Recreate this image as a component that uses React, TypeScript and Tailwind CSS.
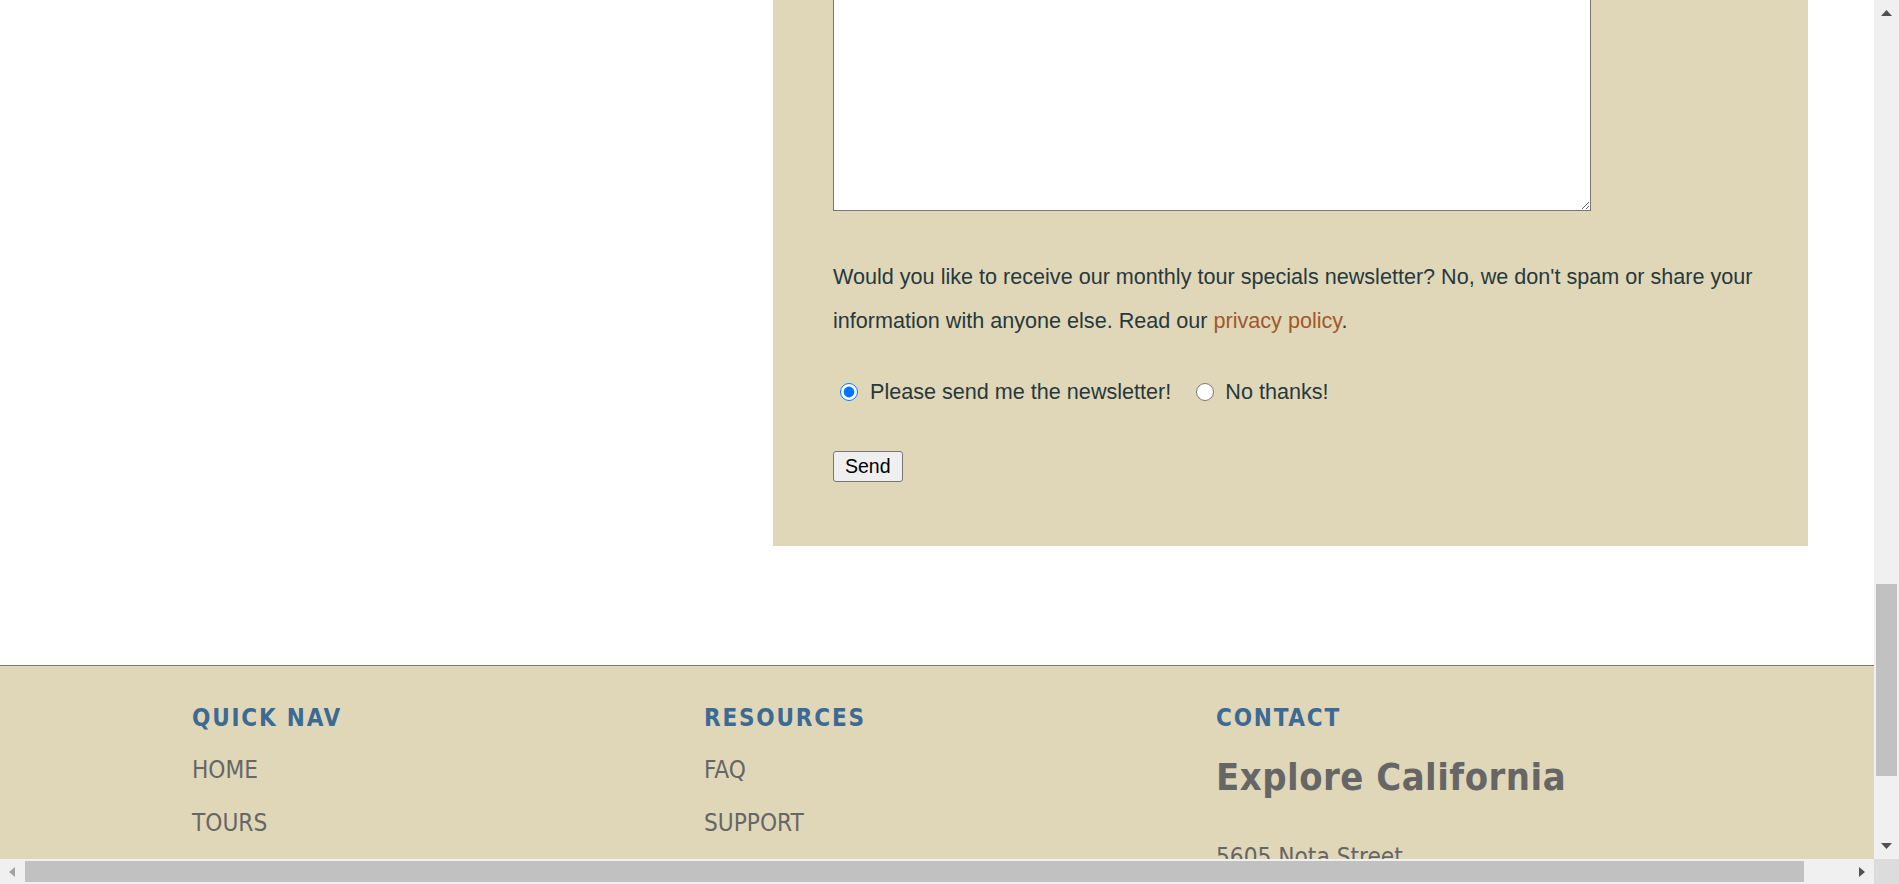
import React from "react"

const navCols = [
  { title: "QUICK NAV", links: ["HOME", "TOURS"] },
  { title: "RESOURCES", links: ["FAQ", "SUPPORT"] },
]

function Arrow({ dir, className }: { dir: "up" | "down" | "left" | "right"; className: string }) {
  const pts = {
    up: "0,6 5.5,0 11,6",
    down: "0,0 11,0 5.5,6",
    left: "6,0 6,10 0,5",
    right: "0,0 0,10 6,5",
  }[dir]
  const vb = dir === "up" || dir === "down" ? "0 0 11 6" : "0 0 6 10"
  const size = dir === "up" || dir === "down" ? "w-[11px] h-[6px]" : "w-[6px] h-[10px]"
  return (
    <svg viewBox={vb} className={`${size} ${className}`}>
      <polygon points={pts} fill="currentColor" />
    </svg>
  )
}

export default function App() {
  return (
    <div className="w-[1899px] h-[884px] overflow-hidden flex flex-col bg-white">
      <div className="flex h-[859px]">
        <main className="w-[1874px] flex flex-col overflow-hidden">
          {/* contact form panel, page scrolled past its top */}
          <div className="h-[665px] shrink-0">
            <section className="ml-[773px] w-[1035px] h-[546px] bg-[#e0d7b8] pl-[60px] pr-[40px] flex flex-col items-start font-['Liberation_Sans',Arial,sans-serif] text-[#27393d]">
              <textarea className="-mt-[10px] h-[221px] w-[758px] bg-white border border-[#767676] resize" />
              <p className="mt-[44px] text-[21.6px] leading-[44px]">
                Would you like to receive our monthly tour specials newsletter? No, we don't spam or share your
                information with anyone else. Read our <a className="text-[#a0582c]">privacy policy</a>.
              </p>
              <div className="mt-[27px] flex items-center text-[21.6px] leading-[44px]">
                <input type="radio" name="news" defaultChecked className="ml-[7px] mr-[12px] w-[18px] h-[18px]" />
                <span>Please send me the newsletter!</span>
                <input type="radio" name="news" className="ml-[25px] mr-[11px] w-[18px] h-[18px]" />
                <span>No thanks!</span>
              </div>
              <button className="mt-[37px] h-[31px] px-[11px] bg-[#efefef] border border-[#767676] rounded-[3px] text-[19.5px] leading-[29px] text-black">
                Send
              </button>
            </section>
          </div>

          <footer className="flex-1 border-t border-[#7a776c] bg-[#e0d7b8] pl-[192px] pt-[37px] grid grid-cols-[512px_512px_512px] items-start font-['DejaVu_Sans_Condensed','DejaVu_Sans',sans-serif] [font-stretch:condensed]">
            {navCols.map((col) => (
              <div key={col.title}>
                <h3 className="text-[24px] leading-[30px] font-bold tracking-[1.8px] text-[#3b6a94]">{col.title}</h3>
                <ul className="mt-[11px]">
                  {col.links.map((l) => (
                    <li key={l} className="text-[24.2px] leading-[53px] text-[#666666]">
                      {l}
                    </li>
                  ))}
                </ul>
              </div>
            ))}
            <div>
              <h3 className="text-[24px] leading-[30px] font-bold tracking-[1.8px] text-[#3b6a94]">CONTACT</h3>
              <h2 className="mt-[20px] text-[37.8px] leading-[48px] font-bold tracking-[0.5px] text-[#666666]">
                Explore California
              </h2>
              <p className="mt-[30px] text-[24.2px] leading-[53px] text-[#666666]">5605 Nota Street</p>
            </div>
          </footer>
        </main>

        {/* vertical scrollbar */}
        <div className="w-[25px] bg-[#f0f0f0] flex flex-col items-center">
          <Arrow dir="up" className="mt-[10px] text-[#505050]" />
          <div className="mt-[568px] w-[21px] h-[192px] bg-[#c1c1c1]" />
          <Arrow dir="down" className="mt-[67px] text-[#505050]" />
        </div>
      </div>

      {/* horizontal scrollbar */}
      <div className="flex h-[25px]">
        <div className="w-[1874px] bg-[#f0f0f0] flex items-center">
          <Arrow dir="left" className="ml-[9px] text-[#a3a3a3]" />
          <div className="ml-[10px] w-[1779px] h-[21px] bg-[#c1c1c1]" />
          <Arrow dir="right" className="ml-[55px] text-[#505050]" />
        </div>
        <div className="w-[25px] bg-[#dcdcdc]" />
      </div>
    </div>
  )
}
